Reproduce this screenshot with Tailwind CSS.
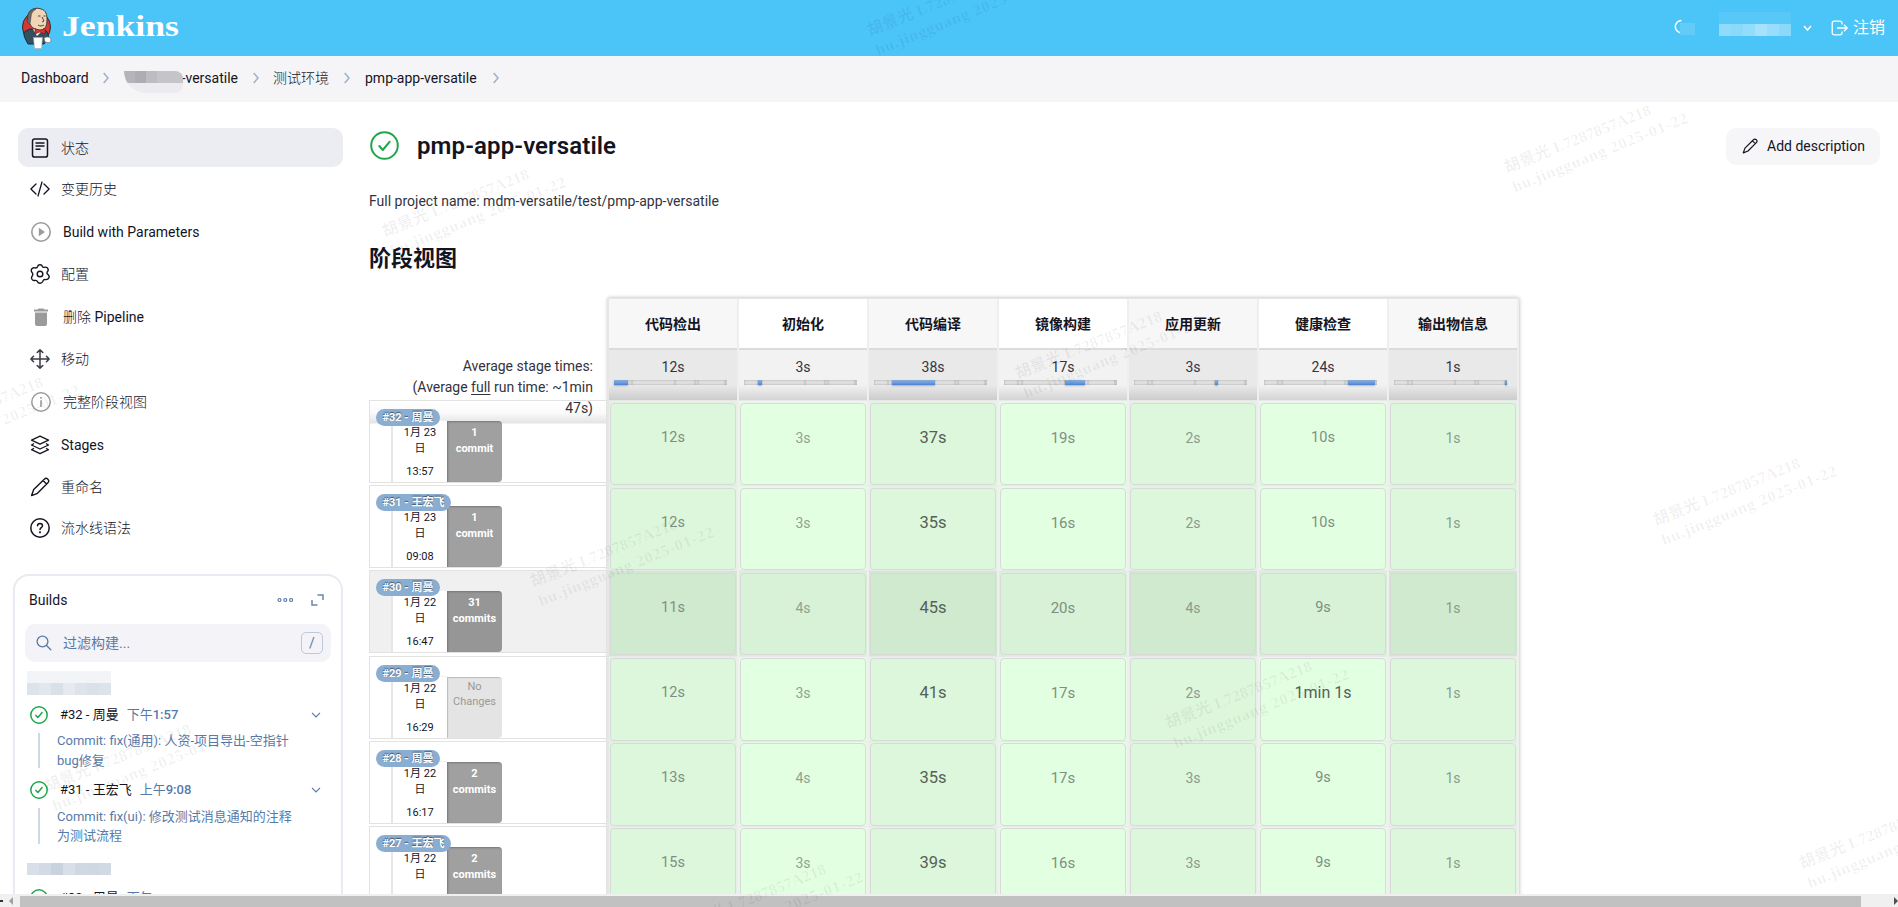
<!DOCTYPE html>
<html lang="zh-CN">
<head>
<meta charset="utf-8">
<title>pmp-app-versatile [Jenkins]</title>
<script src="https://cdn.jsdelivr.net/npm/@tailwindcss/browser@4"></script>
</head>
<body class="relative h-[907px] w-[1898px] overflow-hidden bg-white font-[Roboto,'Noto_Sans_CJK_SC',sans-serif] text-sm text-[#14141f]">
<div class="flex h-full flex-col">

  <!-- Header -->
  <header class="flex h-14 shrink-0 items-center bg-[#4bc4f8] pl-[21px] pr-[13px] text-white">
    <svg width="31" height="42" viewBox="0 0 31 42">
      <ellipse cx="15.500" cy="20" rx="14" ry="15" fill="#d33833" stroke="#2b2b2b" stroke-width="1"/>
      <path d="M7 37C5 33 1 27 4 24.500L9 22l13 1c5 1 6 4 5 9l-4 5z" fill="#335061" stroke="#1d2a35" stroke-width="1"/>
      <path d="M12 22l4 7 6-6z" fill="#fff"/>
      <path d="M7 8c1-6 8-8 13-6 5 1 6 6 6 10 0 6-1 10-6 11-6 0-9-2-11-6-3-1-3-5-2-9z" fill="#f0d6b7" stroke="#3b2f28" stroke-width=".9"/>
      <path d="M9 17c-3-1-3-3-2-5-1-5 3-10 8-10-3 2-5 4-5 8z" fill="#6d6b6d" stroke="#333" stroke-width=".5"/>
      <path d="M17 9h2.500M22.500 9h2M21 10l2 4-2 1M17 18c2 1.500 4 1 6 0" fill="none" stroke="#3b2f28" stroke-width=".9"/>
      <path d="M14 21.500l5 2 5-2v5.500l-5-2-5 2z" fill="#d33833" stroke="#81110f" stroke-width=".6"/>
      <path d="M12.500 30.500h9l-1 11h-7z" fill="#fff" stroke="#aaa" stroke-width=".6"/>
      <path d="M23 31c3-2 7-1 7 2s-3 3-6 2z" fill="#fff" stroke="#666" stroke-width=".6"/>
    </svg>
    <svg class="ml-[10px]" width="120" height="40" viewBox="0 0 120 40"><text x="0" y="28" textLength="117" lengthAdjust="spacingAndGlyphs" fill="#fff" font-family="Liberation Serif, serif" font-weight="700" font-size="30">Jenkins</text></svg>
    <div class="ml-auto flex items-center">
      <svg class="-mt-[2px]" width="24" height="18" viewBox="0 0 24 18"><path d="M9.500 2.500a6.200 6.200 0 1 0 0 12.400" fill="none" stroke="#fff" stroke-width="1.500"/><path d="M8 5h15v12H8z" fill="#63cbf8"/></svg>
      <div class="-mt-[9px] ml-[23px] flex flex-col">
        <div class="h-3 w-[72px] bg-[#58c8f8]"></div>
        <div class="flex h-3 w-[72px]"><i class="flex-1 bg-[#90dbfa]"></i><i class="flex-1 bg-[#8bd9fa]"></i><i class="flex-1 bg-[#94dcfb]"></i><i class="flex-1 bg-[#a6e2fc]"></i><i class="flex-1 bg-[#98ddfb]"></i><i class="flex-1 bg-[#8ad9fa]"></i></div>
      </div>
      <svg class="ml-3" width="9" height="8" viewBox="0 0 9 8"><path d="M1 2l3.500 4L8 2" fill="none" stroke="#fff" stroke-width="1.500"/></svg>
      <svg class="ml-[19px]" width="18" height="16" viewBox="0 0 18 16" fill="none" stroke="#fff" stroke-width="1.300"><path d="M11 4.500V3a1.800 1.800 0 0 0-1.800-1.800H3A1.800 1.800 0 0 0 1.200 3v10A1.800 1.800 0 0 0 3 14.800h6.200A1.800 1.800 0 0 0 11 13v-1.500M6 8h10M13 4.800L16.200 8 13 11.200"/></svg>
      <span class="ml-[4px] text-[16px]">注销</span>
    </div>
  </header>

  <!-- Breadcrumbs -->
  <nav class="flex h-[46px] shrink-0 items-center bg-[#f5f5f8] pb-[2px] pl-[21px]">
    <span class="w-[67px] whitespace-nowrap">Dashboard</span>
    <svg class="ml-[15px]" width="6" height="12" viewBox="0 0 6 12" fill="none" stroke="#9db0cc" stroke-width="1.500"><path d="M.7 1l4.300 5-4.300 5"/></svg>
    <div class="relative ml-[15px] flex w-[114px] justify-end"><span>-versatile</span>
      <div class="absolute left-0 top-[3px] h-[22px] w-[59px] overflow-hidden rounded-r-[14px] rounded-bl-[40px]">
        <div class="flex h-3"><i class="w-[11px] bg-[#b5b4ba]"></i><i class="w-[11px] bg-[#aeadb3]"></i><i class="w-[11px] bg-[#bdbcc1]"></i><i class="w-[26px] bg-[#c5c4c9]"></i></div>
        <div class="h-[10px] bg-[#ececf0]"></div>
      </div>
    </div>
    <svg class="ml-[15px]" width="6" height="12" viewBox="0 0 6 12" fill="none" stroke="#9db0cc" stroke-width="1.500"><path d="M.7 1l4.300 5-4.300 5"/></svg>
    <span class="ml-[14px] font-light">测试环境</span>
    <svg class="ml-[15px]" width="6" height="12" viewBox="0 0 6 12" fill="none" stroke="#9db0cc" stroke-width="1.500"><path d="M.7 1l4.300 5-4.300 5"/></svg>
    <span class="ml-[15px] w-[114px] whitespace-nowrap">pmp-app-versatile</span>
    <svg class="ml-[14px]" width="6" height="12" viewBox="0 0 6 12" fill="none" stroke="#9db0cc" stroke-width="1.500"><path d="M.7 1l4.300 5-4.300 5"/></svg>
  </nav>

  <div class="flex h-[792px] shrink-0 overflow-hidden">
    <!-- Sidebar -->
    <aside class="flex w-[344px] shrink-0 flex-col pt-[26px] [&>*]:shrink-0">
      <a class="ml-[18px] flex h-[39px] w-[325px] items-center rounded-[10px] bg-[#ecedf3] pl-3"><svg width="20" height="20" viewBox="0 0 20 20" fill="none" stroke="#14141f" stroke-width="1.500"><rect x="2.500" y=".9" width="15" height="18.200" rx="2.200"/><path d="M5.500 5h9M5.500 8h9M5.500 11.300h5" stroke-width="1.400"/></svg><span class="ml-[11px] font-light">状态</span></a>
      <a class="flex h-[44px] items-center pl-[30px]"><svg width="20" height="20" viewBox="0 0 20 20" fill="none" stroke="#14141f" stroke-width="1.300" stroke-linecap="round" stroke-linejoin="round"><path d="M6 5L.9 10 6 15M14 5l5.100 5-5.100 5M12 3L8 17"/></svg><span class="ml-[11px] font-light">变更历史</span></a>
      <a class="flex h-[41px] items-center pl-[31px]"><svg width="20" height="20" viewBox="0 0 20 20"><circle cx="10" cy="10" r="9.200" fill="none" stroke="#9b9b9b" stroke-width="1.600"/><path d="M7.800 5.800l6.200 4.200-6.200 4.200z" fill="#9b9b9b"/></svg><span class="ml-3">Build with Parameters</span></a>
      <a class="flex h-[44px] items-center pl-[30px]"><svg width="20" height="20" viewBox="0 0 20 20" fill="none" stroke="#14141f" stroke-width="1.400" stroke-linejoin="round"><path d="M7.600 2.500Q8 .8 10 .8t2.400 1.700q.5 1.100 1.800.8 2-.6 3.300.8 1.300 1.700.2 3.200-1 1.200-.6 2.200.2.600 1.100 1.200 1.500 1.300.7 3.200-1 2-3.200 1.700-1.700-.3-2.300.5-.4.500-.6 1.400Q12 19.200 10 19.200t-2.600-1.700q-.5-1.300-1.900-1.100-2.100.6-3.300-.8-1.200-1.500-.3-3.100.9-1 .9-2.100 0-1.300-.9-2.100-1.200-1.600-.2-3.300 1.100-1.600 3.200-1.100 2.200.3 2.700-1.400z"/><circle cx="10" cy="10" r="2.800"/></svg><span class="ml-[11px] font-light">配置</span></a>
      <a class="flex h-[41px] items-center pl-[31px]"><svg width="20" height="20" viewBox="0 0 20 20" fill="#9b9b9b"><path d="M7.500 1.500h5l.8 1H17v2H3v-2h3.700zM4 5.500h12V17a2 2 0 0 1-2 2H6a2 2 0 0 1-2-2z"/></svg><span class="ml-3"><span class="font-light">删除</span> Pipeline</span></a>
      <a class="flex h-[44px] items-center pl-[30px]"><svg width="20" height="20" viewBox="0 0 20 20" fill="none" stroke="#3b3b48" stroke-width="1.500" stroke-linecap="round" stroke-linejoin="round"><path d="M10 1v18M1 10h18M7.200 3.500L10 .9l2.800 2.600M7.200 16.500l2.800 2.600 2.800-2.600M3.500 7.200L.9 10l2.600 2.800M16.500 7.200l2.600 2.800-2.600 2.800"/></svg><span class="ml-[11px] font-light">移动</span></a>
      <a class="flex h-[42px] items-center pl-[31px]"><svg width="20" height="20" viewBox="0 0 20 20"><circle cx="10" cy="10" r="9.200" fill="none" stroke="#9b9b9b" stroke-width="1.500"/><path d="M9.200 5h1.600v1.700H9.200zM9.200 8.300h1.600V15H9.200z" fill="#9b9b9b"/></svg><span class="ml-3 font-light">完整阶段视图</span></a>
      <a class="flex h-[43px] items-center pl-[30px]"><svg width="20" height="20" viewBox="0 0 20 20" fill="none" stroke="#14141f" stroke-width="1.300" stroke-linejoin="round"><path d="M10 1.200l8.500 4L10 9.200l-8.500-4zM4 8.500L1.500 10l8.500 4 8.500-4L16 8.500M4 13.200l-2.500 1.500 8.500 4 8.500-4-2.500-1.500"/></svg><span class="ml-[11px]">Stages</span></a>
      <a class="flex h-[41px] items-center pl-[30px]"><svg width="20" height="20" viewBox="0 0 20 20" fill="none" stroke="#14141f" stroke-width="1.400" stroke-linejoin="round"><path d="M14.300 2.200a2.500 2.500 0 0 1 3.600 3.500L7.500 16.300 1.600 18.600l2.100-6zM13 3.500l3.600 3.600"/></svg><span class="ml-[11px] font-light">重命名</span></a>
      <a class="flex h-[42px] items-center pl-[30px]"><svg width="20" height="20" viewBox="0 0 20 20" fill="none" stroke="#14141f" stroke-width="1.500" stroke-linecap="round"><circle cx="10" cy="10" r="9.200"/><path d="M7.500 7.700c0-3 5-3 5 0 0 2-2.500 2-2.500 3.800"/><circle cx="10" cy="14.300" r=".4" fill="#14141f"/></svg><span class="ml-[11px] font-light">流水线语法</span></a>

      <!-- Builds card -->
      <section class="ml-[13px] mt-[25px] flex h-[400px] w-[330px] flex-col rounded-[16px] border-2 border-[#e9eaf2] px-[10px]">
        <div class="flex h-[48px] shrink-0 items-center pl-[4px] pr-[7px]">
          <span>Builds</span>
          <svg class="ml-auto" width="17" height="6" viewBox="0 0 17 6" fill="none" stroke="#5577a5" stroke-width="1.200"><circle cx="2.500" cy="3" r="1.500"/><circle cx="8.300" cy="3" r="1.500"/><circle cx="14.100" cy="3" r="1.500"/></svg>
          <svg class="ml-[17px]" width="13" height="12" viewBox="0 0 13 12" fill="none" stroke="#6a86ae" stroke-width="1.500"><path d="M6.500 1H12v5M1 6v5h5.500"/></svg>
        </div>
        <div class="flex h-[38px] shrink-0 items-center rounded-[10px] bg-[#f3f3f8] pl-[11px] pr-2 text-[#587aa8]">
          <svg width="16" height="16" viewBox="0 0 16 16" fill="none" stroke="#587aa8" stroke-width="1.300" stroke-linecap="round"><circle cx="6.500" cy="6.500" r="5.400"/><path d="M10.500 10.500l4.300 4.300"/></svg>
          <span class="ml-[11px]">过滤构建...</span>
          <span class="ml-auto flex size-[22px] items-center justify-center rounded-[5px] border border-[#bccadd]">/</span>
        </div>
        <div class="ml-[2px] mt-[9px] w-[84px] shrink-0">
          <div class="h-3 bg-[#f2f4f7]"></div>
          <div class="flex h-3"><i class="flex-1 bg-[#dde3eb]"></i><i class="flex-1 bg-[#e2e7ee]"></i><i class="flex-1 bg-[#d9e0e9]"></i><i class="flex-1 bg-[#e6eaf0]"></i><i class="flex-1 bg-[#dfe3ea]"></i><i class="flex-1 bg-[#dbe1ea]"></i><i class="flex-1 bg-[#dde3eb]"></i></div>
        </div>
        <div class="mt-[10px] flex h-[20px] shrink-0 items-center pl-[5px] pr-[10px]">
          <svg width="18" height="18" viewBox="0 0 18 18" fill="none" stroke="#1ea64b" stroke-width="1.500" stroke-linecap="round" stroke-linejoin="round"><circle cx="9" cy="9" r="8.200"/><path d="M5.900 9.400l2 2.100 4.200-5"/></svg>
          <span class="ml-3 text-[13px]">#32 - 周曼</span><span class="ml-2 text-[13px] font-medium text-[#587aa8]"><span class="font-normal">下午</span>1:57</span>
          <svg class="ml-auto" width="10" height="6" viewBox="0 0 10 6" fill="none" stroke="#587aa8" stroke-width="1.200"><path d="M1 .8l4 4 4-4"/></svg>
        </div>
        <div class="ml-[13px] mt-[8px] flex h-[35px] shrink-0 items-center border-l-2 border-[#cfd9e5] pl-[17px] text-[13px] leading-[20px] text-[#587aa8]"><span>Commit: fix(通用): 人资-项目导出-空指针<br>bug修复</span></div>
        <div class="mt-[12px] flex h-[20px] shrink-0 items-center pl-[5px] pr-[10px]">
          <svg width="18" height="18" viewBox="0 0 18 18" fill="none" stroke="#1ea64b" stroke-width="1.500" stroke-linecap="round" stroke-linejoin="round"><circle cx="9" cy="9" r="8.200"/><path d="M5.900 9.400l2 2.100 4.200-5"/></svg>
          <span class="ml-3 text-[13px]">#31 - 王宏飞</span><span class="ml-2 text-[13px] font-medium text-[#587aa8]"><span class="font-normal">上午</span>9:08</span>
          <svg class="ml-auto" width="10" height="6" viewBox="0 0 10 6" fill="none" stroke="#587aa8" stroke-width="1.200"><path d="M1 .8l4 4 4-4"/></svg>
        </div>
        <div class="ml-[13px] mt-[8px] flex h-[36px] shrink-0 items-center border-l-2 border-[#cfd9e5] pl-[17px] text-[13px] leading-[19px] text-[#587aa8]"><span>Commit: fix(ui): 修改测试消息通知的注释<br>为测试流程</span></div>
        <div class="ml-[2px] mt-[19px] flex h-3 w-[84px] shrink-0"><i class="flex-1 bg-[#d8dfe8]"></i><i class="flex-1 bg-[#d2dae5]"></i><i class="flex-1 bg-[#c9d3e0]"></i><i class="flex-1 bg-[#d8dfe8]"></i><i class="flex-1 bg-[#d0d8e3]"></i><i class="flex-1 bg-[#ced7e2]"></i><i class="flex-1 bg-[#d1d9e4]"></i></div>
        <div class="mt-[13px] flex h-[20px] shrink-0 items-center pl-[5px]">
          <svg width="18" height="18" viewBox="0 0 18 18" fill="none" stroke="#1ea64b" stroke-width="1.500"><circle cx="9" cy="9" r="8.200"/></svg>
          <span class="ml-3 text-[13px]">#30 - 周曼</span><span class="ml-2 text-[13px] text-[#587aa8]">下午</span>
        </div>
      </section>
    </aside>

    <!-- Content -->
    <main class="flex min-w-0 flex-1 flex-col pl-[25px] pr-[18px]">
      <div class="mt-[26px] flex h-9 shrink-0 items-center">
        <svg class="-mt-px ml-[1px]" width="29" height="29" viewBox="0 0 29 29" fill="none" stroke="#1ea64b" stroke-width="2" stroke-linecap="round" stroke-linejoin="round"><circle cx="14.500" cy="14.500" r="13.300"/><path d="M9.300 15l3.500 4 6.900-8.300"/></svg>
        <h1 class="ml-[18px] text-[24px] font-semibold tracking-[0.1px]">pmp-app-versatile</h1>
        <button class="ml-auto flex h-[37px] w-[154px] items-center rounded-[10px] bg-[#f6f6f9] pl-4">
          <svg width="16" height="16" viewBox="0 0 20 20" fill="none" stroke="#14141f" stroke-width="1.500" stroke-linejoin="round"><path d="M14.300 2.200a2.500 2.500 0 0 1 3.600 3.500L7.500 16.300 1.600 18.600l2.100-6zM13 3.500l3.600 3.600"/></svg>
          <span class="ml-[9px]">Add description</span>
        </button>
      </div>
      <p class="mt-[27px] h-5 shrink-0 leading-5 text-[#333340]">Full project name: mdm-versatile/test/pmp-app-versatile</p>
      <h2 class="mt-[32px] h-8 shrink-0 text-[22px] font-bold leading-8">阶段视图</h2>

      <!-- Stage view -->
      <div class="mt-[23px] flex w-[1149px] shrink-0">
        <div class="relative flex w-[238px] shrink-0 flex-col pt-[102px]">
          <div class="absolute right-[14px] top-[58px] z-10 text-right text-[14px] leading-[21px] text-[#333340]">Average stage times:<br>(Average <u class="underline-offset-2">full</u> run time: ~1min<br>47s)</div>
          <div id="runs" class="flex flex-col"></div>
        </div>
        <div id="stages" class="flex h-[700px] w-[911px] border-l-2 border-t border-[#e6e6e6] bg-[#efefef] shadow-[1px_0_4px_rgba(0,0,0,.3)]"></div>
      </div>
    </main>
  </div>

  <!-- Horizontal scrollbar -->
  <div class="relative z-10 flex h-[13px] shrink-0 items-center bg-[#f0f0f0]">
    <div class="flex h-full w-5 items-center overflow-hidden"><i class="h-[2px] w-[3px] bg-[#333]"></i><i class="ml-[6px] border-y-[4px] border-r-[4px] border-y-transparent border-r-[#a0a0a0]"></i></div>
    <div class="mt-[2px] h-[11px] w-[1843px] bg-[#c1c1c1]"></div>
    <i class="ml-[33px] border-y-[4px] border-l-[4px] border-y-transparent border-l-[#505050]"></i>
  </div>
</div>

<div id="marks" class="pointer-events-none absolute inset-0 z-20 overflow-hidden"></div>

<script>
const runs = [
  ['#32 - 周曼', '1月 23', '13:57', '1', 'commit'],
  ['#31 - 王宏飞', '1月 23', '09:08', '1', 'commit'],
  ['#30 - 周曼', '1月 22', '16:47', '31', 'commits'],
  ['#29 - 周曼', '1月 22', '16:29', 'No', 'Changes'],
  ['#28 - 周曼', '1月 22', '16:17', '2', 'commits'],
  ['#27 - 王宏飞', '1月 22', '', '2', 'commits'],
];
document.getElementById('runs').innerHTML = runs.map((r, i) => {
  const none = r[3] === 'No', hot = i === 2;
  const bg = hot ? 'bg-[#f0f0f0]' : i === 0 ? 'bg-[linear-gradient(#fff_0,#fafafa_12px,#e4e4e4_22px,#fff_23px)]' : 'bg-white';
  const box = none
    ? 'bg-[#e4e4e4] text-[#999] font-normal leading-[15px] pt-[2px] shadow-[inset_1px_1px_1px_#bbb]'
    : (hot ? 'bg-[#969696] ' : 'bg-[#a0a0a0] ') + 'text-white font-bold leading-[16px] pt-[4px] shadow-[inset_1px_1px_2px_#777]';
  return `<div class="h-[85.2px]"><div class="relative flex h-[83px] border border-[#e2e2e2] ${bg}">
    <div class="ml-[21px] mt-[19px] w-[56px] border-l-2 border-t border-l-[#e6e6e6] border-t-[#f0f0f0] bg-white pt-[4px] text-center text-[11px] leading-[16px]">${r[1]}<br>日<div class="mt-[7px]">${r[2]}</div></div>
    <div class="mt-[20px] w-[55px] rounded-r-[4px] text-center text-[11px] ${box}">${r[3]}<br>${r[4]}</div>
    <span class="absolute left-[6px] top-[8px] h-[17px] whitespace-nowrap rounded-full bg-[#8aadd2] px-[6.500px] text-[11px] font-bold leading-[17px] text-white [text-shadow:0_-1px_1px_#456]">${r[0]}</span>
  </div></div>`;
}).join('');

const stages = [
  ['代码检出', '12s', ['12s', '12s', '11s', '12s', '13s', '15s'], 'text-[14.500px] text-[#7d8f80]'],
  ['初始化', '3s', ['3s', '3s', '4s', '3s', '4s', '3s'], 'text-[14px] text-[#8fa391]'],
  ['代码编译', '38s', ['37s', '35s', '45s', '41s', '35s', '39s'], 'text-[16.500px] text-[#556157]'],
  ['镜像构建', '17s', ['19s', '16s', '20s', '17s', '17s', '16s'], 'text-[15px] text-[#7d8f80]'],
  ['应用更新', '3s', ['2s', '2s', '4s', '2s', '3s', '3s'], 'text-[14px] text-[#8a9c8c]'],
  ['健康检查', '24s', ['10s', '10s', '9s', '1min 1s', '9s', '9s'], 'text-[14.500px] text-[#7d8f80]'],
  ['输出物信息', '1s', ['1s', '1s', '1s', '1s', '1s', '1s'], 'text-[14px] text-[#8a9c8c]'],
];
const segments = [14, 4, 43, 20, 3, 27, 2];
document.getElementById('stages').innerHTML = stages.map((s, c) => {
  const odd = c % 2 === 0;
  const bar = segments.map((w, i) => `<i class="h-[5px] ${i === c ? 'bg-[linear-gradient(#86aedb,#6a9ad9_60%,#4a7fd4)] shadow-[0_1px_2px_rgba(0,0,0,.25)]' : 'bg-[#e0e0e0] shadow-[inset_0_0_2px_#999]'}" style="width:${w}px"></i>`).join('');
  const cells = s[2].map((t, r) => {
    const hot = r === 2;
    const td = hot ? (odd ? 'bg-[#d3e6d2]' : 'bg-[#dbeeda]') : (odd ? 'bg-[#e2f3e1]' : 'bg-[#e8fae7]');
    const cell = hot ? (odd ? 'bg-[#d0ead0]' : 'bg-[#d7f2d6]') : (odd ? 'bg-[#ddf7dc]' : 'bg-[#e3ffe2]');
    const tone = t === '1min 1s' ? 'text-[16px] text-[#556157]' : s[3];
    return `<div class="h-[85.2px] border-t border-[#e8e8ea] px-px pt-[1.500px] ${td}"><div class="h-[82.500px] rounded-[4px] border border-[#d6dbd8] pt-[23px] text-center leading-[22px] ${cell} ${tone}">${t}</div></div>`;
  }).join('');
  return `<div class="w-[130px] shrink-0 border-r-2 border-[#efefef]">
    <div class="flex h-[49px] items-center justify-center font-bold ${odd ? 'bg-[#f7f7f7]' : 'bg-white'}">${s[0]}</div>
    <div class="flex h-[52px] flex-col items-start border-t-2 border-[#dcdcdc] pl-[5px] ${odd ? 'bg-[linear-gradient(#e9e9e9_70%,#cccccc)]' : 'bg-[linear-gradient(#f2f2f2_70%,#d4d4d4)]'}"><span class="mt-[7px] w-[118px] text-center leading-[21px] text-[#333340]">${s[1]}</span><span class="mt-[2px] flex h-[5px] w-[113px]">${bar}</span></div>
    ${cells}</div>`;
}).join('');

// Watermark centres across the canvas
const marks = [[475,206],[1597,142],[-11,414],[623,556],[1108,348],[1746,495],[137,761],[772,901],[1258,698],[1892,838],[960,5],[-92,869]];
document.getElementById('marks').innerHTML = marks.map(([x, y]) =>
  `<div class="absolute h-[42px] w-[190px] -rotate-[22deg] whitespace-nowrap font-['Liberation_Serif','Noto_Sans_CJK_SC',serif] text-[16px] font-bold leading-[21px] text-black/6" style="left:${x - 95}px;top:${y - 21}px"><span class="tracking-[0.15px]">胡景光 L7287857A218</span><br><span class="tracking-[0.85px]">hu.jingguang 2025-01-22</span></div>`).join('');
</script>
</body>
</html>
